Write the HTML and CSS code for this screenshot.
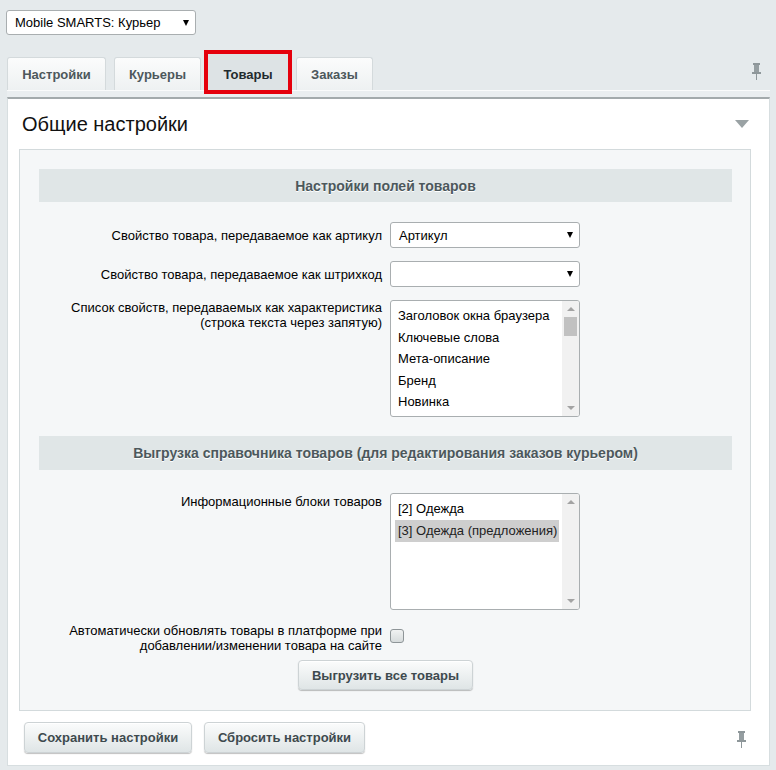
FILE: index.html
```html
<!DOCTYPE html>
<html lang="ru">
<head>
<meta charset="utf-8">
<link rel="stylesheet" href="styles.css">
</head>
<body>
<div class="top">
  <div class="drop site-drop"><span>Mobile SMARTS: Курьер</span><span class="caret"></span></div>
</div>
<div class="tabs">
  <div class="tab">Настройки</div>
  <div class="tab">Курьеры</div>
  <div class="tab active">Товары</div>
  <div class="tab">Заказы</div>
  <svg class="pin pin-top" width="11" height="17" viewBox="0 0 11 17"><rect x="2" y="0" width="7" height="2" fill="#8e979a"/><rect x="3" y="2" width="5" height="7" fill="#959ea1"/><rect x="1" y="9" width="9" height="2" fill="#8e979a"/><rect x="5" y="11" width="1" height="6" fill="#8e979a"/></svg>
</div>
<div class="tabline"></div>
<div class="panel">
  <div class="title"><span>Общие настройки</span><span class="tri"></span></div>
  <div class="box">
    <div class="head">Настройки полей товаров</div>
    <div class="grid g1">
      <div class="lbl mid">Свойство товара, передаваемое как артикул</div>
      <div class="drop ctl"><span>Артикул</span><span class="caret"></span></div>
      <div class="lbl mid">Свойство товара, передаваемое как штрихкод</div>
      <div class="drop ctl"><span></span><span class="caret"></span></div>
      <div class="lbl">Список свойств, передаваемых как характеристика<br>(строка текста через запятую)</div>
      <div class="listbox">
        <div class="opts o1">
          <div class="opt">Заголовок окна браузера</div>
          <div class="opt">Ключевые слова</div>
          <div class="opt">Мета-описание</div>
          <div class="opt">Бренд</div>
          <div class="opt">Новинка</div>
        </div>
        <div class="sb"><span class="up"></span><span class="thumb"></span><span class="fill"></span><span class="down"></span></div>
      </div>
    </div>
    <div class="head h2">Выгрузка справочника товаров (для редактирования заказов курьером)</div>
    <div class="grid g2">
      <div class="lbl l2">Информационные блоки товаров</div>
      <div class="listbox">
        <div class="opts o2">
          <div class="opt2">[2] Одежда</div>
          <div class="opt2 sel">[3] Одежда (предложения)</div>
        </div>
        <div class="sb"><span class="up"></span><span class="fill"></span><span class="down"></span></div>
      </div>
      <div class="lbl mid">Автоматически обновлять товары в платформе при<br>добавлении/изменении товара на сайте</div>
      <div class="chkcell"><span class="chk"></span></div>
    </div>
    <div class="center"><button class="btn">Выгрузить все товары</button></div>
  </div>
  <div class="foot">
    <button class="btn b-save">Сохранить настройки</button>
    <button class="btn b-reset">Сбросить настройки</button>
    <svg class="pin pin-bottom" width="11" height="17" viewBox="0 0 11 17"><rect x="2" y="0" width="7" height="2" fill="#8e979a"/><rect x="3" y="2" width="5" height="7" fill="#959ea1"/><rect x="1" y="9" width="9" height="2" fill="#8e979a"/><rect x="5" y="11" width="1" height="6" fill="#8e979a"/></svg>
  </div>
</div>
</body>
</html>
```
FILE: styles.css
```css
* { box-sizing: border-box; }
body {
  margin: 0;
  background: #e5eaec;
  font-family: "Liberation Sans", Arial, sans-serif;
  font-size: 13px;
  color: #000;
  width: 776px;
  height: 770px;
  overflow: hidden;
}
.top { padding: 10px 6px 0; height: 35px; }
.drop {
  display: flex;
  align-items: center;
  justify-content: space-between;
  background: #fff;
  border: 1px solid #a9aeb0;
  border-radius: 3px;
  padding: 0 6px 0 8px;
}
.site-drop { width: 190px; height: 25px; }
.caret {
  width: 0; height: 0;
  border-left: 3.5px solid transparent;
  border-right: 3.5px solid transparent;
  border-top: 6px solid #000;
}
.tabs {
  display: flex;
  align-items: flex-end;
  gap: 8px;
  margin-top: 18px;
  padding-left: 7px;
  height: 37px;
}
.tab {
  height: 33px;
  padding: 0 14px;
  display: flex;
  align-items: center;
  justify-content: center;
  font-weight: bold;
  color: #4d585c;
  background: linear-gradient(#fbfcfc, #eef1f2);
  border: 1px solid #d4dadc;
  border-bottom: none;
  border-radius: 3px 3px 0 0;
}
.tab:nth-child(1) { width: 99px; }
.tab:nth-child(2) { width: 87px; }
.tab:nth-child(4) { width: 77px; }
.tab.active {
  position: relative;
  height: 37px;
  width: 80px;
  padding-top: 4px;
  margin-left: -1px;
  background: #dde3e5;
  color: #1f2a2e;
  border-color: #dde3e5;
  border-radius: 0;
}
.tab.active::after {
  content: "";
  position: absolute;
  left: -5px; right: -5px; top: -4px; bottom: -4px;
  border: 4px solid #e5000c;
}
.pin-top { margin-left: auto; margin-right: 14px; align-self: flex-start; margin-top: 10px; }
.tabline {
  height: 7px;
  margin: 0 6px 0 7px;
  border-top: 1px solid #fafbfb;
  background: #eaeef0;
}
.panel {
  margin: 0 6px 0 7px;
  background: #fff;
  border-top: 2px solid #a3aaac;
  border-left: 1px solid #d7dee0;
  border-right: 1px solid #d7dee0;
  border-bottom: 1px solid #d7dee0;
  padding-bottom: 12px;
}
.title {
  height: 50px;
  display: flex;
  align-items: center;
  justify-content: space-between;
  padding: 0 20px 0 14px;
  font-size: 20px;
  color: #111;
}
.tri {
  width: 0; height: 0;
  border-left: 7.5px solid transparent;
  border-right: 7.5px solid transparent;
  border-top: 8px solid #9aa2a4;
}
.box {
  margin: 0 18px 0 11px;
  background: #f5f7f8;
  border: 1px solid #d3dadc;
  padding: 19px 18px 20px 19px;
}
.head {
  height: 33px;
  background: #e0e6e7;
  display: flex;
  align-items: center;
  justify-content: center;
  font-size: 14px;
  font-weight: bold;
  color: #4c585c;
  text-shadow: 0 1px 0 #fff;
}
.head.h2 { height: 34px; }
.grid {
  display: grid;
  grid-template-columns: 343px 190px;
  column-gap: 8px;
  row-gap: 13px;
}
.g1 { margin: 20px 0 19px; }
.g2 { margin: 23px 0 7px; }
.lbl { text-align: right; line-height: 15px; white-space: nowrap; }
.lbl.mid { align-self: center; }
.lbl.l2 { padding-top: 1px; }
.ctl { height: 26px; padding-left: 8px; }
.listbox {
  height: 117px;
  background: #fff;
  border: 1px solid #a9aeb0;
  border-radius: 3px;
  display: flex;
  overflow: hidden;
}
.opts { flex: 1; padding-left: 4px; padding-right: 3px; }
.o1 { padding-top: 4px; }
.o2 { padding-top: 4px; }
.opt { line-height: 21.5px; padding-left: 3px; white-space: nowrap; }
.opt2 { line-height: 22px; height: 22px; padding-left: 3px; white-space: nowrap; }
.opt2.sel { background: #cecece; color: #222; }
.sb {
  width: 17px;
  background: #f1f1f1;
  display: flex;
  flex-direction: column;
  align-items: center;
}
.up, .down { height: 16px; width: 17px; display: flex; align-items: center; justify-content: center; }
.up::before {
  content: "";
  border-left: 4px solid transparent;
  border-right: 4px solid transparent;
  border-bottom: 4px solid #a3a3a3;
}
.down::before {
  content: "";
  border-left: 4px solid transparent;
  border-right: 4px solid transparent;
  border-top: 4px solid #a3a3a3;
}
.thumb { width: 13px; height: 19px; background: #c1c1c1; }
.fill { flex: 1; }
.chkcell { display: flex; align-items: center; padding-bottom: 4px; }
.chk {
  width: 14px; height: 14px;
  border: 1px solid #8e9598;
  border-radius: 3px;
  background: linear-gradient(#f0f2f2, #d6dbdc);
}
.center { display: flex; justify-content: center; }
.btn {
  font-family: "Liberation Sans", Arial, sans-serif;
  font-size: 13px;
  font-weight: bold;
  color: #3e4a4e;
  height: 30px;
  padding: 0 13px;
  border: 1px solid #cdd3d5;
  border-radius: 4px;
  background: linear-gradient(#fbfcfc, #dfe5e6);
  box-shadow: 0 1px 1px rgba(0,0,0,0.25), inset 0 1px 0 #fff;
}
.foot {
  display: flex;
  align-items: center;
  gap: 12px;
  padding: 11px 0 0 16px;
}
.foot .btn { height: 31px; padding: 0; }
.b-save { width: 168px; }
.b-reset { width: 161px; }
.pin-bottom { margin-left: auto; margin-right: 22px; margin-top: 3px; }
```
